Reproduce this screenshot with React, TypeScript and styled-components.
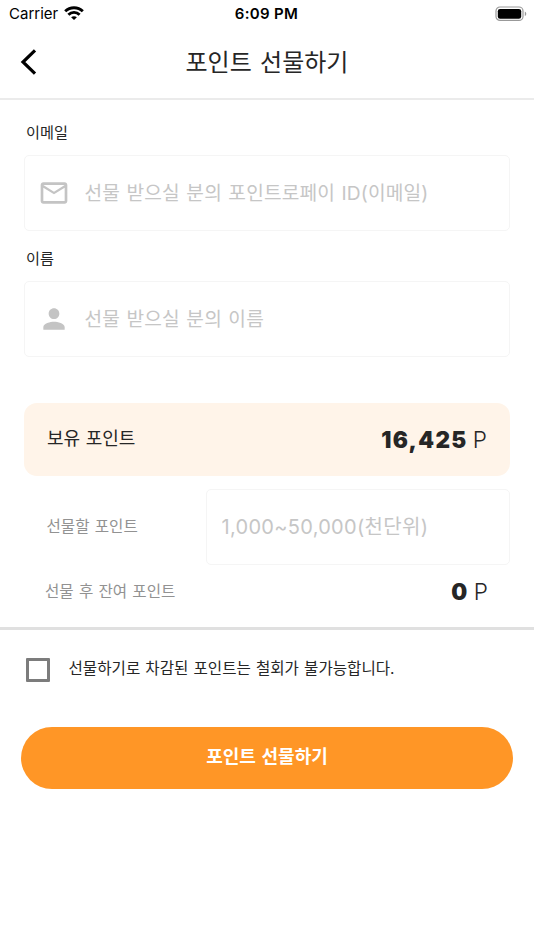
import React, { useState } from "react";
import styled, { createGlobalStyle } from "styled-components";

const GlobalStyle = createGlobalStyle`
  * { box-sizing: border-box; }
  body {
    margin: 0;
    background: #fff;
    color: #262626;
    font-family: Inter, "Noto Sans CJK KR", sans-serif;
  }
`;

const Screen = styled.div`
  display: flex;
  flex-direction: column;
  width: 534px;
  height: 950px;
  overflow: hidden;
  background: #fff;
`;

const StatusBar = styled.div`
  display: grid;
  grid-template-columns: 1fr auto 1fr;
  align-items: center;
  height: 28px;
  padding: 0 7px 1px 9px;
  color: #000;
`;

const Carrier = styled.div`
  display: flex;
  align-items: center;
  gap: 6px;
  font-size: 15px;
`;

const Clock = styled.div`
  padding-right: 3px;
  font-size: 15px;
  font-weight: 600;
  letter-spacing: 0.3px;
`;

const BatteryIcon = styled.svg`
  justify-self: end;
`;

const Header = styled.header`
  display: grid;
  grid-template-columns: 60px 1fr 60px;
  align-items: center;
  height: 72px;
  padding-bottom: 2px;
  border-bottom: 2px solid #ebebeb;
`;

const BackButton = styled.button`
  display: flex;
  padding: 0 0 0 19.5px;
  border: 0;
  background: none;
`;

const Title = styled.h1`
  margin: 0;
  padding-top: 1px;
  text-align: center;
  font-size: 24px;
  line-height: 36px;
  font-weight: 400;
  word-spacing: 1.6px;
`;

const Form = styled.main`
  display: flex;
  flex-direction: column;
  padding: 20px 24px 0;
`;

const FieldLabel = styled.label<{ $gap: number }>`
  margin-top: ${(p) => p.$gap}px;
  padding-left: 2px;
  height: 35px;
  font-size: 15.2px;
  line-height: 26px;
`;

const FieldBox = styled.div<{ $indent: number }>`
  display: flex;
  align-items: center;
  min-width: 0;
  height: 76px;
  padding: 0 16px 0 ${(p) => p.$indent}px;
  border: 1.5px solid #f5f5f5;
  border-radius: 5px;
  color: #c4c4c4;
`;

const FieldInput = styled.input<{ $size?: number; $tracking?: number }>`
  flex: 1;
  min-width: 0;
  height: 32px;
  padding: 0;
  border: 0;
  outline: 0;
  background: none;
  font: 400 ${(p) => p.$size ?? 19.2}px/30px Inter, "Noto Sans CJK KR", sans-serif;
  letter-spacing: ${(p) => p.$tracking ?? 0.14}px;
  word-spacing: 0.9px;
  color: #262626;
  &::placeholder {
    color: #c6c6c6;
    opacity: 1;
  }
`;

const FieldIcon = styled.svg`
  flex: none;
  width: 32px;
  height: 32px;
  margin-right: 14.5px;
  fill: #c4c4c4;
`;

const BalanceCard = styled.section`
  display: flex;
  align-items: center;
  justify-content: space-between;
  height: 73px;
  margin-top: 45.6px;
  padding: 0 23px;
  border-radius: 13px;
  background: #fff4e9;
`;

const BalanceLabel = styled.span`
  padding-bottom: 4px;
  font-size: 18px;
  word-spacing: 0.5px;
`;

const Amount = styled.span`
  padding-top: 1px;
  font-size: 22.5px;
  font-weight: 300;
  line-height: 30px;
`;

const AmountValue = styled.b`
  margin-right: -1px;
  font-weight: 900;
  letter-spacing: 1.3px;
`;

const AmountRow = styled.div`
  display: grid;
  grid-template-columns: 182px minmax(0, 1fr);
  align-items: center;
  margin-top: 13px;
`;

const MutedLabel = styled.span<{ $indent: number }>`
  padding-left: ${(p) => p.$indent}px;
  font-size: 15.6px;
  line-height: 24px;
  word-spacing: 0.8px;
  color: #929292;
`;

const RemainingRow = styled.div`
  display: flex;
  align-items: center;
  justify-content: space-between;
  height: 62px;
  padding: 0 22px 8px 0;
`;

const Divider = styled.hr`
  width: 100%;
  height: 3px;
  margin: 0;
  border: 0;
  background: #e0e0e0;
`;

const Consent = styled.label`
  display: flex;
  align-items: center;
  gap: 18.5px;
  height: 24px;
  margin: 28px 26px 0;
`;

const Checkbox = styled.input`
  appearance: none;
  width: 24px;
  height: 24px;
  margin: 0;
  border: 3px solid #7c7c7c;
  border-radius: 1px;
  &:checked { background: #ff9626; }
`;

const ConsentText = styled.span`
  padding-bottom: 1px;
  font-size: 15.6px;
  line-height: 24px;
  word-spacing: 0.7px;
`;

const SubmitButton = styled.button`
  height: 62.5px;
  margin: 44.6px 21px 0;
  padding: 0 0 1px;
  border: 0;
  border-radius: 32px;
  background: #ff9626;
  color: #fff;
  font: 700 18px/28px Inter, "Noto Sans CJK KR", sans-serif;
  word-spacing: 1.4px;
`;

export default function App() {
  const [agreed, setAgreed] = useState(false);

  return (
    <Screen>
      <GlobalStyle />
      <StatusBar>
        <Carrier>
          <span>Carrier</span>
          <svg width="20" height="15" viewBox="0 0 20 15" fill="none" stroke="#000" strokeWidth="2.9">
            <path d="M1.2 5.3C6.1.5 13.9.5 18.8 5.3" />
            <path d="M4.4 8.7C7.5 5.6 12.5 5.6 15.6 8.7" />
            <path d="M10 14 7.1 11.3C8.8 9.8 11.2 9.8 12.9 11.3Z" fill="#000" stroke="none" />
          </svg>
        </Carrier>
        <Clock>6:09 PM</Clock>
        <BatteryIcon width="32" height="16" viewBox="0 0 32 16">
          <rect x="1" y="1" width="27" height="13.4" rx="4" fill="none" stroke="#999" strokeWidth="1.2" />
          <rect x="2.8" y="2.9" width="23.4" height="9.8" rx="2.3" fill="#000" />
          <path d="M29.8 5.4C31.8 6.4 31.8 9.1 29.8 10Z" fill="#999" />
        </BatteryIcon>
      </StatusBar>

      <Header>
        <BackButton aria-label="뒤로">
          <svg width="18" height="26" viewBox="0 0 18 26" fill="none" stroke="#000" strokeWidth="3.2">
            <path d="M15 1.3 3 13l12 11.7" />
          </svg>
        </BackButton>
        <Title>포인트 선물하기</Title>
      </Header>

      <Form>
        <FieldLabel htmlFor="email" $gap={0}>이메일</FieldLabel>
        <FieldBox $indent={13}>
          <FieldIcon viewBox="0 0 24 24">
            <path d="M22 6c0-1.1-.9-2-2-2H4c-1.100 0-2 .9-2 2v12c0 1.100.9 2 2 2h16c1.100 0 2-.9 2-2V6zm-2 0-8 5-8-5h16zm0 12H4V8l8 5 8-5v10z" />
          </FieldIcon>
          <FieldInput id="email" placeholder="선물 받으실 분의 포인트로페이 ID(이메일)" />
        </FieldBox>

        <FieldLabel htmlFor="name" $gap={15.4}>이름</FieldLabel>
        <FieldBox $indent={13}>
          <FieldIcon viewBox="0 0 24 24">
            <path d="M12 12c2.210 0 4-1.790 4-4s-1.790-4-4-4-4 1.790-4 4 1.790 4 4 4zm0 2c-2.670 0-8 1.340-8 4v2h16v-2c0-2.660-5.330-4-8-4z" />
          </FieldIcon>
          <FieldInput id="name" placeholder="선물 받으실 분의 이름" />
        </FieldBox>

        <BalanceCard>
          <BalanceLabel>보유 포인트</BalanceLabel>
          <Amount><AmountValue>16,425</AmountValue> P</Amount>
        </BalanceCard>

        <AmountRow>
          <MutedLabel $indent={22.5}>선물할 포인트</MutedLabel>
          <FieldBox $indent={14.5}>
            <FieldInput placeholder="1,000~50,000(천단위)" $size={20} $tracking={0.3} />
          </FieldBox>
        </AmountRow>

        <RemainingRow>
          <MutedLabel $indent={21}>선물 후 잔여 포인트</MutedLabel>
          <Amount><AmountValue>0</AmountValue> P</Amount>
        </RemainingRow>
      </Form>

      <Divider />

      <Consent>
        <Checkbox type="checkbox" checked={agreed} onChange={(e) => setAgreed(e.target.checked)} />
        <ConsentText>선물하기로 차감된 포인트는 철회가 불가능합니다.</ConsentText>
      </Consent>

      <SubmitButton>포인트 선물하기</SubmitButton>
    </Screen>
  );
}
